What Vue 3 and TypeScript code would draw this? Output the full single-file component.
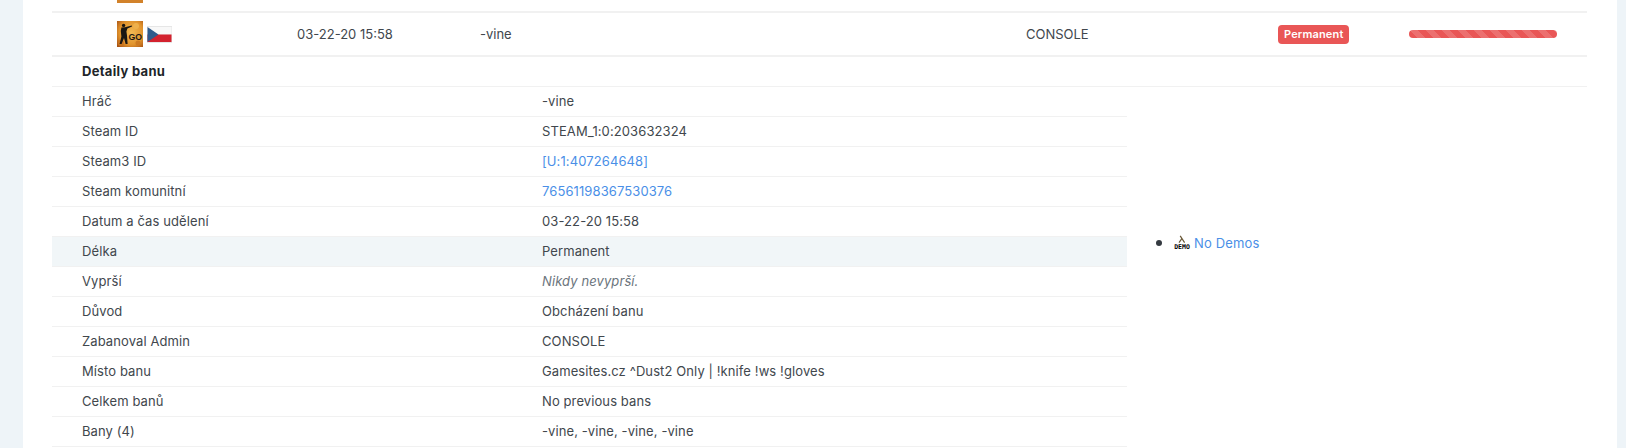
<template>
  <div class="page">
    <div class="card">
      <div class="top-stub">
        <div class="stub-icon"></div>
      </div>

      <div class="ban-row">
        <div class="col col-icons">
          <svg class="mod-icon" viewBox="0 0 26 26" xmlns="http://www.w3.org/2000/svg">
            <defs>
              <radialGradient id="go-bg" cx="55%" cy="45%" r="72%">
                <stop offset="0%" stop-color="#f3bb55" />
                <stop offset="65%" stop-color="#e0922c" />
                <stop offset="100%" stop-color="#a95414" />
              </radialGradient>
            </defs>
            <rect width="26" height="26" fill="url(#go-bg)" />
            <circle cx="19" cy="5" r="3" fill="#eeb04c" />
            <circle cx="4" cy="22" r="3" fill="#c9741f" />
            <circle cx="21" cy="22" r="2.5" fill="#cc7a22" />
            <circle cx="6.6" cy="4.4" r="1.7" fill="#191613" />
            <path d="M4.4 6.6 8 6.2 14.8 4.6 15 5.6 10.4 7.6 9.4 10.5 10 14.5 10.6 23H8.6L7 17 4.6 23H2.6L4.4 15.5 3.8 10Z" fill="#191613" />
            <text x="11.4" y="19" textLength="13.6" lengthAdjust="spacingAndGlyphs" class="go-text">GO</text>
          </svg>
          <svg class="flag" viewBox="0 0 25 17" xmlns="http://www.w3.org/2000/svg">
            <rect width="25" height="17" fill="#e6e6e6" />
            <rect x="0.5" y="1" width="24" height="7.5" fill="#f8f8f8" />
            <rect x="0.5" y="8.5" width="24" height="7.5" fill="#d3222e" />
            <path d="M0.5 1 11.5 8.5 0.5 16Z" fill="#2f5b8c" />
          </svg>
        </div>
        <div class="col col-date">03-22-20 15:58</div>
        <div class="col col-name">-vine</div>
        <div class="col col-admin">CONSOLE</div>
        <div class="col col-badge"><span class="badge">Permanent</span></div>
        <div class="col col-progress"><div class="progress"></div></div>
      </div>

      <div class="detail-head">Detaily banu</div>

      <div class="detail">
        <div class="detail-left">
          <div
            v-for="row in rows"
            :key="row.label"
            class="info-row"
            :class="{ active: row.active }"
          >
            <div class="info-label">{{ row.label }}</div>
            <div class="info-value" :class="{ link: row.link, muted: row.muted }">{{ row.value }}</div>
          </div>
        </div>
        <div class="detail-right">
          <ul class="demo-list">
            <li>
              <span class="demo-icon">
                <svg width="12" height="8" viewBox="0 0 12 8" xmlns="http://www.w3.org/2000/svg">
                  <path d="M4.2 0.8 8.6 7.6M6 3.4 3 7.6" fill="none" stroke="#6b5a3a" stroke-width="1.2" />
                </svg>
                <span class="demo-word">DEMO</span>
              </span>
              <span class="link">No Demos</span>
            </li>
          </ul>
        </div>
      </div>
    </div>
  </div>
</template>

<script setup lang="ts">
interface InfoRow {
  label: string;
  value: string;
  link?: boolean;
  muted?: boolean;
  active?: boolean;
}

const rows: InfoRow[] = [
  { label: "Hráč", value: "-vine" },
  { label: "Steam ID", value: "STEAM_1:0:203632324" },
  { label: "Steam3 ID", value: "[U:1:407264648]", link: true },
  { label: "Steam komunitní", value: "76561198367530376", link: true },
  { label: "Datum a čas udělení", value: "03-22-20 15:58" },
  { label: "Délka", value: "Permanent", active: true },
  { label: "Vyprší", value: "Nikdy nevyprší.", muted: true },
  { label: "Důvod", value: "Obcházení banu" },
  { label: "Zabanoval Admin", value: "CONSOLE" },
  { label: "Místo banu", value: "Gamesites.cz ^Dust2 Only | !knife !ws !gloves" },
  { label: "Celkem banů", value: "No previous bans" },
  { label: "Bany (4)", value: "-vine, -vine, -vine, -vine" }
];
</script>

<style>
html,
body {
  margin: 0;
  background: #eef4f8;
}
</style>

<style scoped>
.page {
  height: 448px;
  overflow: hidden;
  padding: 0 9px 0 23px;
  font-family: "Inter", "Liberation Sans", sans-serif;
  font-size: 13px;
  color: #41474d;
}

.card {
  background: #fff;
  height: 448px;
  padding: 0 30px 0 29px;
}

/* kousek předchozího řádku nahoře */
.top-stub {
  height: 11px;
  padding-left: 65px;
  border-bottom: 2px solid #f1f1f1;
}
.stub-icon {
  width: 26px;
  height: 3px;
  background: #d2822a;
}

.ban-row {
  display: flex;
  align-items: center;
  height: 42px;
  border-bottom: 2px solid #f1f1f1;
}
.col-icons {
  width: 245px;
  padding-left: 65px;
  box-sizing: border-box;
  display: flex;
  align-items: center;
  gap: 4px;
}
.mod-icon {
  width: 26px;
  height: 26px;
}
.flag {
  width: 25px;
  height: 17px;
}
.go-text {
  font: bold 9.5px "Liberation Sans", sans-serif;
  fill: #191613;
}
.col-date {
  width: 183px;
}
.col-name {
  width: 546px;
}
.col-admin {
  width: 252px;
}
.col-badge {
  width: 131px;
}
.badge {
  display: inline-block;
  background: #e95656;
  color: #fff;
  font-size: 11px;
  font-weight: 600;
  line-height: 19px;
  padding: 0 6px;
  letter-spacing: 0.15px;
  border-radius: 4px;
}
.progress {
  width: 148px;
  height: 8px;
  border-radius: 4px;
  background-color: #e95656;
  background-image: linear-gradient(
    45deg,
    rgba(255, 255, 255, 0.15) 25%,
    transparent 25%,
    transparent 50%,
    rgba(255, 255, 255, 0.15) 50%,
    rgba(255, 255, 255, 0.15) 75%,
    transparent 75%
  );
  background-size: 16px 16px;
}

.detail-head {
  height: 29px;
  line-height: 29px;
  padding-left: 30px;
  font-weight: 700;
  letter-spacing: 0.3px;
  color: #212529;
  border-bottom: 1px solid #f1f1f1;
}

.detail {
  display: flex;
}
.detail-left {
  width: 1075px;
}
.info-row {
  display: flex;
  height: 29px;
  line-height: 29px;
  letter-spacing: 0.1px;
  border-bottom: 1px solid #f1f1f1;
}
.info-row.active {
  background: #f1f6f8;
}
.info-label {
  width: 460px;
  padding-left: 30px;
}
.info-value {
  flex: 1;
}
.link {
  color: #4a8fe7;
}
.muted {
  color: #6c757d;
  font-style: italic;
}

.detail-right {
  flex: 1;
  display: flex;
  align-items: center;
  padding-bottom: 48px;
}
.demo-list {
  margin: 0;
  padding: 0 0 0 29px;
  list-style: none;
}
.demo-list li {
  display: flex;
  align-items: center;
  letter-spacing: 0.15px;
}
.demo-list li::before {
  content: "";
  width: 6px;
  height: 6px;
  border-radius: 50%;
  background: #343a40;
  margin-right: 11px;
}
.demo-icon {
  display: inline-flex;
  flex-direction: column;
  align-items: center;
  width: 18px;
  margin-right: 3px;
  line-height: 1;
  letter-spacing: 0;
}
.demo-word {
  font: bold 6.5px "DejaVu Sans Mono", monospace;
  color: #000;
}
</style>
